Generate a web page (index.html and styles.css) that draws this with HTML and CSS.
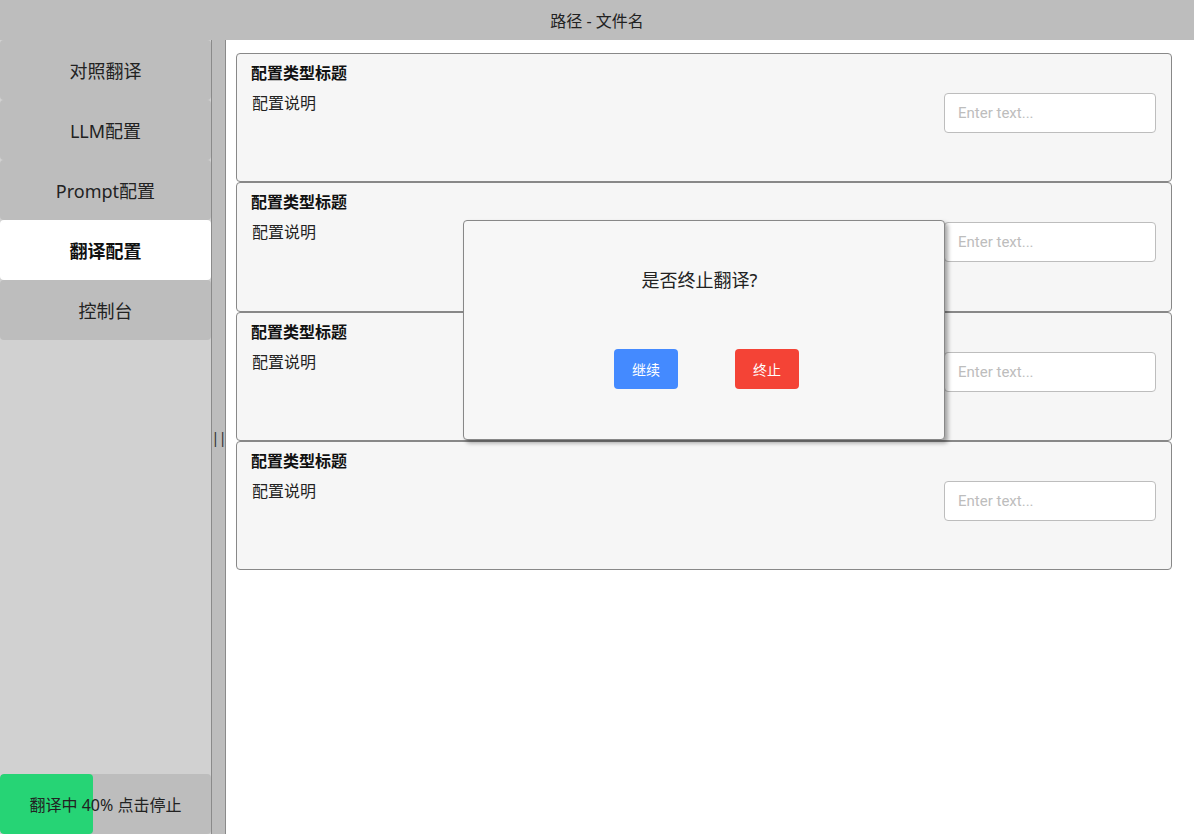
FILE: index.html
```html
<!DOCTYPE html>
<html lang="zh-CN">
<head>
<meta charset="utf-8">
<title>路径 - 文件名</title>
<link rel="stylesheet" href="styles.css">
</head>
<body>
<div class="app">
  <header class="titlebar">路径 - 文件名</header>
  <div class="main">
    <nav class="sidebar">
      <div class="nav-item">对照翻译</div>
      <div class="nav-item">LLM配置</div>
      <div class="nav-item">Prompt配置</div>
      <div class="nav-item active">翻译配置</div>
      <div class="nav-item">控制台</div>
      <div class="spacer"></div>
      <div class="progress-btn">
        <div class="progress-fill" style="width:44%"></div>
        <span class="progress-text">翻译中 40% 点击停止</span>
      </div>
    </nav>
    <div class="splitter"><span>||</span></div>
    <section class="content">
      <div class="card">
        <div class="card-title">配置类型标题</div>
        <div class="card-row">
          <div class="card-desc">配置说明</div>
          <input class="text-input" type="text" placeholder="Enter text...">
        </div>
      </div>
      <div class="card">
        <div class="card-title">配置类型标题</div>
        <div class="card-row">
          <div class="card-desc">配置说明</div>
          <input class="text-input" type="text" placeholder="Enter text...">
        </div>
      </div>
      <div class="card">
        <div class="card-title">配置类型标题</div>
        <div class="card-row">
          <div class="card-desc">配置说明</div>
          <input class="text-input" type="text" placeholder="Enter text...">
        </div>
      </div>
      <div class="card">
        <div class="card-title">配置类型标题</div>
        <div class="card-row">
          <div class="card-desc">配置说明</div>
          <input class="text-input" type="text" placeholder="Enter text...">
        </div>
      </div>
      <div class="modal">
        <div class="modal-text">是否终止翻译?</div>
        <div class="modal-actions">
          <button class="btn btn-blue">继续</button>
          <button class="btn btn-red">终止</button>
        </div>
      </div>
    </section>
  </div>
</div>
</body>
</html>
```

FILE: styles.css
```css
* { box-sizing: border-box; }
html, body { margin: 0; padding: 0; }
body {
  font-family: "Noto Sans", "Noto Sans CJK SC", sans-serif;
  color: #1e1e1e;
  background: #ffffff;
}
.app {
  width: 1194px;
  height: 834px;
  display: flex;
  flex-direction: column;
  overflow: hidden;
}
.titlebar {
  height: 40px;
  flex: 0 0 40px;
  background: #bdbdbd;
  display: flex;
  align-items: center;
  justify-content: center;
  font-size: 16px;
  color: #222;
}
.main {
  flex: 1;
  display: flex;
  min-height: 0;
}
.sidebar {
  width: 211px;
  flex: 0 0 211px;
  background: #d1d1d1;
  display: flex;
  flex-direction: column;
}
.nav-item {
  height: 60px;
  flex: 0 0 60px;
  background: #bdbdbd;
  border-radius: 4px;
  display: flex;
  align-items: center;
  justify-content: center;
  font-size: 18px;
  color: #222;
}
.nav-item.active {
  background: #ffffff;
  font-weight: bold;
  color: #111;
}
.spacer { flex: 1; }
.progress-btn {
  position: relative;
  height: 60px;
  flex: 0 0 60px;
  background: #bdbdbd;
  border-radius: 4px;
  overflow: hidden;
  display: flex;
  align-items: center;
  justify-content: center;
}
.progress-fill {
  position: absolute;
  left: 0;
  top: 0;
  bottom: 0;
  background: #26d475;
  border-radius: 4px;
}
.progress-text {
  position: relative;
  font-size: 16px;
  color: #222;
}
.splitter {
  width: 15px;
  flex: 0 0 15px;
  background: #bdbdbd;
  border-left: 1px solid #8a8a8a;
  border-right: 1px solid #8a8a8a;
  display: flex;
  align-items: center;
  justify-content: center;
  font-size: 15px;
  color: #333;
  letter-spacing: -1px;
}
.content {
  position: relative;
  flex: 1;
  background: #ffffff;
  padding: 13px 22px 0 10px;
  display: flex;
  flex-direction: column;
}
.card {
  height: 129.3px;
  flex: 0 0 129.3px;
  background: #f6f6f6;
  border: 1px solid #888;
  border-radius: 4px;
  padding: 9px 15px 0 14px;
  display: flex;
  flex-direction: column;
}
.card-title {
  font-size: 16px;
  font-weight: bold;
  line-height: 20px;
  color: #111;
}
.card-row {
  display: flex;
  justify-content: space-between;
  align-items: flex-start;
  margin-top: 9px;
}
.card-desc {
  font-size: 16px;
  line-height: 22px;
  padding-left: 1px;
  color: #222;
}
.text-input {
  width: 212px;
  height: 40px;
  border: 1px solid #bdbdbd;
  border-radius: 4px;
  background: #fff;
  padding: 0 13px;
  font-family: Roboto, "Noto Sans", sans-serif;
  font-size: 15px;
  color: #333;
  outline: none;
  margin-top: 1px;
}
.text-input::placeholder { color: #bdbdbd; }
.modal {
  position: absolute;
  left: 237px;
  top: 180px;
  width: 482px;
  height: 220px;
  background: #f7f7f7;
  border: 1px solid #888;
  border-radius: 4px;
  box-shadow: 3px 3px 4px rgba(0, 0, 0, 0.35);
  display: flex;
  flex-direction: column;
  align-items: center;
}
.modal-text {
  margin-top: 46px;
  padding-right: 9px;
  font-size: 18px;
  line-height: 26px;
  color: #222;
}
.modal-actions {
  margin-top: 56px;
  display: flex;
  gap: 57px;
  padding-left: 5px;
}
.btn {
  width: 64px;
  height: 40px;
  border: none;
  border-radius: 4px;
  color: #fff;
  font-family: "Noto Sans", "Noto Sans CJK SC", sans-serif;
  font-size: 14px;
  padding: 0;
}
.btn-blue { background: #448aff; }
.btn-red { background: #f44336; }
```
